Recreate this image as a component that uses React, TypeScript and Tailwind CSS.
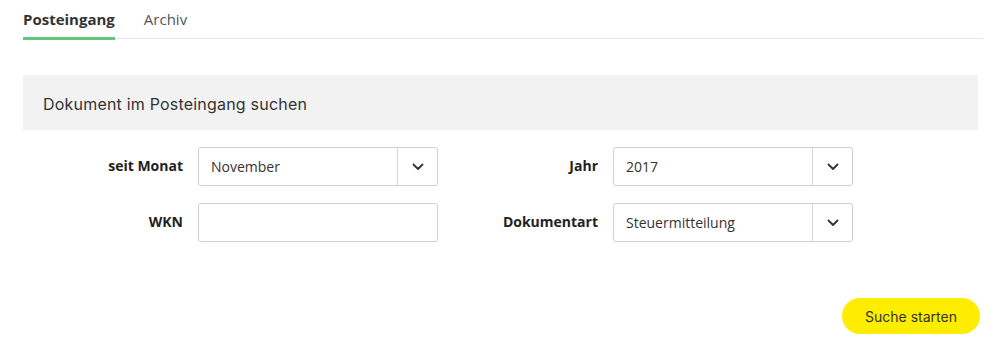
import React from "react";

const Chevron = () => (
  <svg width="12" height="8" viewBox="0 0 12 8" fill="none">
    <path d="M1.5 1.5 L6 6 L10.5 1.5" stroke="#333" strokeWidth="1.8" strokeLinecap="round" strokeLinejoin="round" />
  </svg>
);

const Select = ({ value }: { value: string }) => (
  <div className="flex h-[39px] w-[240px] items-stretch rounded-[3px] border border-[#cfcfcf] bg-white">
    <div className="flex flex-1 items-center pb-[1px] pl-[12px] text-[14px] text-[#333]">{value}</div>
    <div className="flex w-[40px] items-center justify-center border-l border-[#d5d5d5]">
      <Chevron />
    </div>
  </div>
);

const Input = () => <div className="h-[39px] w-[240px] rounded-[3px] border border-[#cfcfcf] bg-white" />;

const Field = ({ label, children }: { label: string; children: React.ReactNode }) => (
  <div className="flex items-center">
    <div className="w-[175px] pb-[3px] pr-[15px] text-right text-[14px] font-bold text-[#222]">{label}</div>
    {children}
  </div>
);

export default function App() {
  return (
    <div className="h-[361px] w-[998px] bg-white px-[23px] pt-[8px]" style={{ fontFamily: '"Open Sans", "Liberation Sans", sans-serif' }}>
      <div className="flex h-[31px] w-[960px] items-stretch gap-[29px] border-b border-[#e8e8e8]">
        <div className="relative text-[15px] font-bold text-[#333]">
          Posteingang
          <div className="absolute bottom-[-2px] left-0 right-0 h-[3px] bg-[#5cc97e]" />
        </div>
        <div className="text-[15px] text-[#555]">Archiv</div>
      </div>
      <div
        className="mt-[36px] flex h-[55px] w-[955px] items-center bg-[#f2f2f2] pl-[20px] pt-[2px] text-[16px] tracking-[0.2px] text-[#333]"
        style={{ fontFamily: 'Inter, "Noto Sans", sans-serif' }}
      >
        Dokument im Posteingang suchen
      </div>
      <div className="mt-[17px] flex flex-col gap-[17px]">
        <div className="flex">
          <Field label="seit Monat">
            <Select value="November" />
          </Field>
          <Field label="Jahr">
            <Select value="2017" />
          </Field>
        </div>
        <div className="flex">
          <Field label="WKN">
            <Input />
          </Field>
          <Field label="Dokumentart">
            <Select value="Steuermitteilung" />
          </Field>
        </div>
      </div>
      <div className="mt-[56px] flex w-[957px] justify-end">
        <button
          className="h-[36px] w-[138px] rounded-full bg-[#ffed00] text-[14px] text-[#333]"
          style={{ fontFamily: 'Inter, "Noto Sans", sans-serif' }}
        >
          Suche starten
        </button>
      </div>
    </div>
  );
}
